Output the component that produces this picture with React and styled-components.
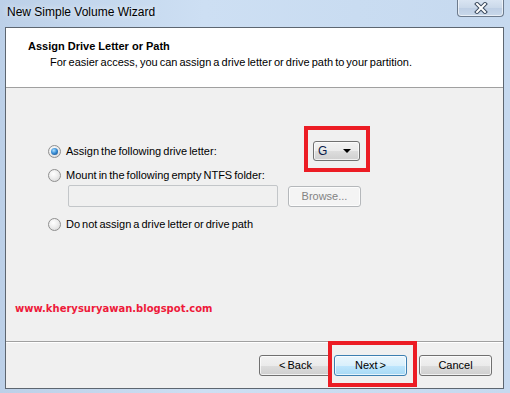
import React from "react";
import styled, { createGlobalStyle } from "styled-components";

const Global = createGlobalStyle`
  html, body { margin: 0; padding: 0; overflow: hidden; background: #c6d9ef; }
  * { box-sizing: border-box; }
`;

const FONT = `"Liberation Sans", Arial, sans-serif`;

const Window = styled.div`
  width: 510px;
  height: 393px;
  display: flex;
  flex-direction: column;
  background: linear-gradient(90deg, #bcd0e8 0%, #cddff3 40%, #c9dcf1 70%, #c6d9ef 100%);
  font-family: ${FONT};
  font-size: 11px;
  word-spacing: -1px;
  color: #000;
  padding: 0 6px 4px 5px;
`;

const TitleBar = styled.div`
  height: 27px;
  display: flex;
  align-items: flex-start;
  justify-content: space-between;
  margin-left: -5px;
  padding-left: 7px;
`;

const TitleText = styled.span`
  margin-top: 5px;
  font-size: 12px;
  word-spacing: 0;
  color: #000;
  text-shadow: 0 0 6px rgba(255,255,255,0.9);
`;

const CloseBtn = styled.div`
  width: 47px;
  height: 18px;
  margin-top: -1px;
  border: 1px solid #6d7b8d;
  border-top: none;
  border-radius: 0 0 4px 4px;
  background: linear-gradient(#dbe6f3, #cbd9ea 50%, #bdcee4 51%, #c9d8ea);
  box-shadow: inset 0 0 0 1px rgba(255,255,255,0.6);
  display: flex;
  align-items: center;
  justify-content: center;
`;

const Client = styled.div`
  flex: 1;
  display: flex;
  flex-direction: column;
  border: 1px solid #5d6670;
  background: #f0f0f0;
`;

const Header = styled.div`
  height: 60px;
  background: #fff;
  border-bottom: 1px solid #a0a0a0;
  padding: 10px 0 0 22px;
  display: flex;
  flex-direction: column;
`;

const HeaderTitle = styled.div`
  font-weight: bold;
  word-spacing: 0;
  line-height: 16px;
`;

const HeaderSub = styled.div`
  line-height: 16px;
  padding-left: 22px;
`;

const Body = styled.div`
  flex: 1;
  display: flex;
  flex-direction: column;
  padding: 53px 0 0 42px;
  border-bottom: 1px solid #a0a0a0;
  box-shadow: 0 1px 0 #fff;
`;

const Row = styled.div`
  display: grid;
  grid-template-columns: ${(p) => p.$cols || "auto"};
  justify-items: start;
  align-items: center;
  margin-top: ${(p) => p.$mt || 0}px;
  height: ${(p) => p.$h || 14}px;
`;

const RadioLabel = styled.label`
  display: flex;
  align-items: center;
  gap: 5px;
  line-height: 14px;
`;

const RadioCircle = styled.span`
  width: 13px;
  height: 13px;
  border-radius: 50%;
  border: 1px solid #8f8f8f;
  background: radial-gradient(circle at 40% 35%, #ffffff 0%, #f0f0f0 40%, #d4d4d4 100%);
  display: inline-flex;
  align-items: center;
  justify-content: center;
  flex: none;
  &::after {
    content: "";
    width: 7px;
    height: 7px;
    border-radius: 50%;
    display: ${(p) => (p.$checked ? "block" : "none")};
    background: radial-gradient(circle at 40% 35%, #aee0ff 0%, #3a8fd6 45%, #0e3f7a 100%);
  }
`;

const Anchor = styled.div`
  position: relative;
  display: inline-flex;
`;

const Highlight = styled.div`
  position: absolute;
  border: 4px solid #ec1c24;
  top: ${(p) => p.$t}px;
  left: ${(p) => p.$l}px;
  right: ${(p) => p.$r}px;
  bottom: ${(p) => p.$b}px;
  pointer-events: none;
`;

const Combo = styled.div`
  width: 47px;
  height: 20px;
  border: 1px solid #707070;
  border-radius: 3px;
  background: linear-gradient(#f2f2f2 0%, #ebebeb 50%, #dddddd 51%, #cfcfcf 100%);
  box-shadow: inset 0 0 0 1px rgba(255,255,255,0.7);
  display: flex;
  align-items: center;
  justify-content: space-between;
  padding: 0 8px 0 4px;
  font-size: 12px;
  color: #0a1a4a;
`;

const Arrow = styled.span`
  width: 0;
  height: 0;
  border-left: 4px solid transparent;
  border-right: 4px solid transparent;
  border-top: 4px solid #000;
`;

const FolderRow = styled.div`
  display: flex;
  align-items: center;
  gap: 10px;
  margin-top: 3px;
  padding-left: 20px;
  height: 22px;
`;

const TextField = styled.div`
  width: 210px;
  height: 22px;
  border: 1px solid #c3c6c9;
  border-radius: 2px;
  background: #f0f0f0;
`;

const Button = styled.div`
  width: ${(p) => p.$w || 73}px;
  height: ${(p) => p.$h || 21}px;
  border: 1px solid ${(p) => (p.$disabled ? "#b5b8bb" : p.$default ? "#3c7fb1" : "#707070")};
  border-radius: 3px;
  background: ${(p) =>
    p.$disabled
      ? "#f4f4f4"
      : p.$default
      ? "linear-gradient(#eaf6fd 0%, #d9f0fc 50%, #bee6fd 51%, #a7d9f5 100%)"
      : "linear-gradient(#f2f2f2 0%, #ebebeb 50%, #dddddd 51%, #cfcfcf 100%)"};
  box-shadow: inset 0 0 0 1px rgba(255,255,255,0.7);
  color: ${(p) => (p.$disabled ? "#838383" : "#000")};
  display: flex;
  align-items: center;
  justify-content: center;
`;

const Watermark = styled.div`
  margin-top: auto;
  margin-bottom: 27px;
  margin-left: -33px;
  font-family: "DejaVu Sans", Verdana, sans-serif;
  font-weight: bold;
  font-size: 10px;
  word-spacing: 0;
  color: #ee1a3a;
`;

const Footer = styled.div`
  height: 45px;
  display: flex;
  align-items: center;
  justify-content: flex-end;
  padding: 0 11px 1px 0;
  margin-top: 1px;
`;

const NavGroup = styled.div`
  display: flex;
  gap: 2px;
  margin-right: 12px;
`;

const Radio = ({ checked, children }) => (
  <RadioLabel>
    <RadioCircle $checked={checked} />
    <span>{children}</span>
  </RadioLabel>
);

export default function App() {
  return (
    <>
      <Global />
      <Window>
        <TitleBar>
          <TitleText>New Simple Volume Wizard</TitleText>
          <CloseBtn>
            <svg width="14" height="12" viewBox="0 0 14 12">
              <path
                d="M3 2 L11 10 M11 2 L3 10"
                stroke="#3b4a5e"
                strokeWidth="4"
                strokeLinecap="square"
              />
              <path
                d="M3 2 L11 10 M11 2 L3 10"
                stroke="#fff"
                strokeWidth="2"
                strokeLinecap="square"
              />
            </svg>
          </CloseBtn>
        </TitleBar>
        <Client>
          <Header>
            <HeaderTitle>Assign Drive Letter or Path</HeaderTitle>
            <HeaderSub>
              For easier access, you can assign a drive letter or drive path to your partition.
            </HeaderSub>
          </Header>
          <Body>
            <Row $cols="265px auto" $h={20}>
              <Radio checked>Assign the following drive letter:</Radio>
              <Anchor>
                <Combo>
                  <span>G</span>
                  <Arrow />
                </Combo>
                <Highlight $t={-15} $l={-9} $r={-10} $b={-11} />
              </Anchor>
            </Row>
            <Row $mt={7}>
              <Radio>Mount in the following empty NTFS folder:</Radio>
            </Row>
            <FolderRow>
              <TextField />
              <Button $w={73} $disabled>Browse...</Button>
            </FolderRow>
            <Row $mt={10}>
              <Radio>Do not assign a drive letter or drive path</Radio>
            </Row>
            <Watermark>www.kherysuryawan.blogspot.com</Watermark>
          </Body>
          <Footer>
            <NavGroup>
              <Button>&lt; Back</Button>
              <Anchor>
                <Button $default>Next &gt;</Button>
                <Highlight $t={-14} $l={-6} $r={-10} $b={-11} />
              </Anchor>
            </NavGroup>
            <Button>Cancel</Button>
          </Footer>
        </Client>
      </Window>
    </>
  );
}
